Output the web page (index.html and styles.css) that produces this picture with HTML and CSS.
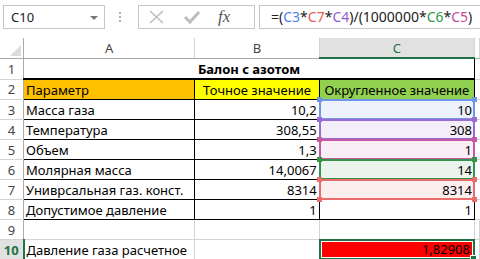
FILE: index.html
```html
<!DOCTYPE html>
<html>
  <head>
    <meta name="viewport" content="width=device-width, initial-scale=1">
    <link rel="stylesheet" href="styles.css">
  </head>
  <body>
    <div class="fbar">
      <div class="namebox">C10<span class="dd"></span></div>
      <div class="grip"></div>
      <div class="btns">
        <svg width="18" height="14" viewBox="0 0 18 14"><path d="M2 1 L15 13 M15 1 L2 13" stroke="#bdbdbd" stroke-width="1.6" fill="none"/></svg>
        <svg width="18" height="14" viewBox="0 0 18 14"><path d="M2 7 L7 12 L16 2" stroke="#bdbdbd" stroke-width="3" fill="none"/></svg>
        <span class="fx">fx</span>
      </div>
      <div class="formula">=(<span class="c-blue">C3</span>*<span class="c-red">C7</span>*<span class="c-purple">C4</span>)/(1000000*<span class="c-green">C6</span>*<span class="c-pink">C5</span>)</div>
    </div>

    <table class="sheet">
      <colgroup><col class="w-rh"><col class="w-a"><col class="w-b"><col class="w-c"><col></colgroup>
      <tr class="colhead">
        <th class="corner"><span class="tri"></span></th><th>A</th><th>B</th><th class="sel">C</th><th></th>
      </tr>
      <tr class="r1">
        <th>1</th><td colspan="3" class="title">Балон с азотом</td><td class="edge"></td>
      </tr>
      <tr class="grid">
        <th>2</th><td class="bg-orange">Параметр</td><td class="bg-yellow center">Точное значение</td><td class="bg-green center">Округленное значение</td><td class="edge"></td>
      </tr>
      <tr class="grid">
        <th>3</th><td>Масса газа</td><td class="num">10,2</td><td class="num ref"><div class="hl hl-blue"><i></i><i></i><i></i><i></i></div><span>10</span></td><td class="edge"></td>
      </tr>
      <tr class="grid">
        <th>4</th><td>Температура</td><td class="num">308,55</td><td class="num ref"><div class="hl hl-purple"><i></i><i></i><i></i><i></i></div><span>308</span></td><td class="edge"></td>
      </tr>
      <tr class="grid">
        <th>5</th><td>Объем</td><td class="num">1,3</td><td class="num ref"><div class="hl hl-pink"><i></i><i></i><i></i><i></i></div><span>1</span></td><td class="edge"></td>
      </tr>
      <tr class="grid">
        <th>6</th><td>Молярная масса</td><td class="num">14,0067</td><td class="num ref"><div class="hl hl-green"><i></i><i></i><i></i><i></i></div><span>14</span></td><td class="edge"></td>
      </tr>
      <tr class="grid">
        <th>7</th><td>Униврсальная газ. конст.</td><td class="num">8314</td><td class="num ref"><div class="hl hl-red"><i></i><i></i><i></i><i></i></div><span>8314</span></td><td class="edge"></td>
      </tr>
      <tr class="grid last">
        <th>8</th><td>Допустимое давление</td><td class="num">1</td><td class="num">1</td><td class="edge"></td>
      </tr>
      <tr class="plain">
        <th>9</th><td></td><td></td><td></td><td></td>
      </tr>
      <tr class="plain">
        <th class="selrow">10</th><td>Давление газа расчетное</td><td></td><td class="num active"><div class="cur"><span>1,82908</span><i></i></div></td><td></td>
      </tr>
    </table>
  </body>
</html>
```

FILE: styles.css
```css
body { margin: 0; background: #fff; font-family: "Noto Sans", "Open Sans", sans-serif; color: #000; overflow: hidden; }

/* formula bar */
.fbar { display: flex; align-items: center; height: 29px; padding-top: 2px; }
.namebox { width: 93px; height: 22px; margin-left: 3px; border: 1px solid #c6c6c6; font-size: 13px; line-height: 22px; padding-left: 7px; position: relative; color: #222; }
.dd { position: absolute; right: 6px; top: 10px; border-left: 4px solid transparent; border-right: 4px solid transparent; border-top: 4px solid #777; }
.grip { width: 2px; height: 10px; margin: 0 15px 0 14px; border-left: 2px dotted #b0b0b0; }
.btns { width: 106px; height: 22px; border: 1px solid #c6c6c6; display: flex; align-items: center; gap: 17px; padding-left: 9px; box-sizing: content-box; }
.fx { font-family: "Liberation Serif", serif; font-style: italic; font-size: 17px; color: #555; margin-left: 0; }
.formula { flex: 1; height: 22px; margin-left: 4px; border: 1px solid #c6c6c6; border-right: none; font-size: 14px; line-height: 22px; padding-left: 11px; color: #222; }
.c-blue { color: #4f7fe3; }
.c-red { color: #e65b5b; }
.c-purple { color: #8d5fcf; }
.c-green { color: #2f9b45; }
.c-pink { color: #c44b9b; }

/* sheet */
.sheet { border-collapse: collapse; table-layout: fixed; margin-top: 7px; font-size: 13px; }
.w-rh { width: 24px; }
.w-a { width: 172px; }
.w-b { width: 126px; }
.w-c { width: 156px; }
.sheet th, .sheet td { height: 19px; padding: 0 2px; white-space: nowrap; overflow: visible; }
.sheet th { font-weight: normal; color: #444; border: 1px solid #d4d4d4; text-align: center; background: #fff; }
.sheet td { border: 1px solid #d4d4d4; }
.colhead th { border-top: none; border-bottom: 1px solid #ababab; }
.colhead th.sel { background: #e1e1e1; color: #217346; border-bottom: 2px solid #217346; }
.corner { position: relative; }
.tri { position: absolute; right: 2px; bottom: 2px; border-left: 11px solid transparent; border-bottom: 11px solid #dcdcdc; }
.sheet tr > th:first-child { border-left: none; border-right: 1px solid #ababab; }
th.selrow { color: #217346; font-weight: bold; border-right: 2px solid #217346 !important; background: #e1e1e1; }

.title { text-align: center; font-weight: bold; border-bottom: 2px solid #000 !important; border-right: 1px solid #000 !important; }
.grid td { border: 1px solid #000; }
.grid td.edge, .r1 td.edge { border: none; border-left: 1px solid #000; border-bottom: 1px solid #d4d4d4; }
.grid td:first-of-type { border-left: 1px solid #000; }
.bg-orange { background: #ffc000; }
.bg-yellow { background: #ffff00; }
.bg-green { background: #92d050; }
.center { text-align: center; }
.num { text-align: right; }

.ref { position: relative; }
.ref span { position: relative; }
.hl { position: absolute; left: -1px; right: -1px; top: -1px; bottom: -1px; border: 2px solid; }
.hl i { position: absolute; width: 5px; height: 5px; background: inherit; }
.hl i:nth-child(1) { left: -4px; top: -4px; }
.hl i:nth-child(2) { right: -4px; top: -4px; }
.hl i:nth-child(3) { left: -4px; bottom: -4px; }
.hl i:nth-child(4) { right: -4px; bottom: -4px; }
.hl-blue { border-color: #6f95e6; background-color: #edf2fc; }
.hl-blue i { background: #6f95e6; }
.hl-purple { border-color: #9a6bd2; background-color: #f3effa; }
.hl-purple i { background: #9a6bd2; }
.hl-pink { border-color: #c45a9f; background-color: #f9eef6; }
.hl-pink i { background: #c45a9f; }
.hl-green { border-color: #34944a; background-color: #eaf4ec; }
.hl-green i { background: #34944a; }
.hl-red { border-color: #ea6b6b; background-color: #fdeeee; }
.hl-red i { background: #ea6b6b; }

.active { position: relative; padding: 0; }
.cur { position: absolute; left: -1px; right: -1px; top: -1px; bottom: -1px; border: 2px solid #217346; box-shadow: inset 0 0 0 1px #fff; background: #ff0000; text-align: right; padding-right: 3px; line-height: 16px; }
.cur i { position: absolute; right: -4px; bottom: -4px; width: 5px; height: 5px; background: #217346; border: 1px solid #fff; }
```
